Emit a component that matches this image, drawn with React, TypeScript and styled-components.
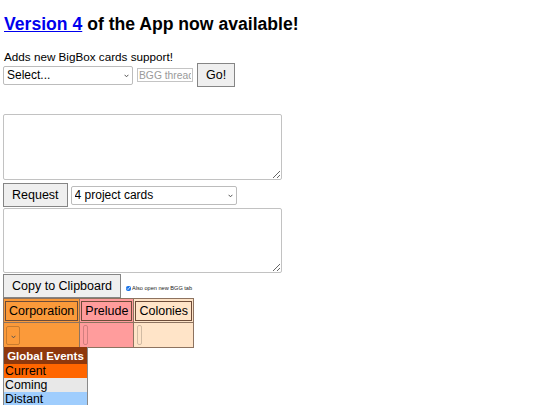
import React from "react";
import styled, { createGlobalStyle } from "styled-components";

const GlobalStyle = createGlobalStyle`
  html, body { margin: 0; padding: 0; background: #ffffff; }
  body { font-family: "Liberation Sans", Arial, sans-serif; color: #000; }
`;

const Page = styled.div`
  display: flex;
  flex-direction: column;
  align-items: flex-start;
  padding: 0 3px;
`;

const Title = styled.h3`
  margin: 14px 0 0 1px;
  font-size: 17.6px;
  line-height: 20px;
  font-weight: bold;
  a { color: #0000ee; text-decoration: underline; }
`;

const Note = styled.p`
  margin: 16px 0 0 1px;
  font-size: 11.7px;
  line-height: 13px;
`;

const Row = styled.div<{ $top?: number; $gap?: number }>`
  display: flex;
  align-items: center;
  gap: ${(p) => p.$gap ?? 4}px;
  margin-top: ${(p) => p.$top ?? 0}px;
`;

const SelectWrap = styled.span`
  position: relative;
  display: inline-flex;
`;

const Chevron = styled.svg<{ $right: number }>`
  position: absolute;
  right: ${(p) => p.$right}px;
  top: 50%;
  width: 5px;
  height: 4px;
  margin-top: -1px;
  pointer-events: none;
`;

const Select = styled.select<{ $w: number }>`
  appearance: none;
  width: ${(p) => p.$w}px;
  height: 19px;
  box-sizing: border-box;
  font-family: "Liberation Sans", Arial, sans-serif;
  font-size: 12px;
  border: 1px solid #bcbcbc;
  border-radius: 2px;
  background: #fff;
  color: #000;
  padding: 0 12px 0 3px;
  margin: 0;
`;

const ThreadInput = styled.input`
  width: 56px;
  height: 14px;
  box-sizing: border-box;
  font-family: "Liberation Sans", Arial, sans-serif;
  font-size: 10.3px;
  border: 1px solid #c4c4c4;
  padding: 0 1px;
  margin: 0;
  &::placeholder { color: #9a9a9a; }
`;

const Button = styled.button`
  height: 24px;
  box-sizing: border-box;
  font-family: "Liberation Sans", Arial, sans-serif;
  font-size: 12.5px;
  line-height: 14px;
  padding: 0 8px;
  margin: 0;
  background: #efefef;
  color: #000;
  border: 1px solid #858585;
  border-radius: 0;
`;

const TextArea = styled.textarea<{ $top: number; $h: number }>`
  display: block;
  width: 279px;
  height: ${(p) => p.$h}px;
  box-sizing: border-box;
  margin: ${(p) => p.$top}px 0 0 0;
  border: 1px solid #c2c2c2;
  border-radius: 2px;
  font-family: "Liberation Mono", monospace;
  font-size: 12px;
`;

const Check = styled.input`
  width: 5px;
  height: 5px;
  margin: 4px 0 0 5px;
  accent-color: #1a73e8;
`;

const TinyLabel = styled.span`
  font-size: 5.6px;
  line-height: 7px;
  margin: 4px 0 0 1px;
  color: #222;
`;

const CardTable = styled.table`
  border-collapse: collapse;
  border: 1px solid #8d7360;
  margin: 0;
`;

const CardCell = styled.td<{ $bg: string; $h: number }>`
  background: ${(p) => p.$bg};
  border: 1px solid #8d7360;
  padding: 0 1px;
  height: ${(p) => p.$h}px;
  box-sizing: border-box;
  vertical-align: middle;
`;

const CardButton = styled.button<{ $bg: string }>`
  display: block;
  height: 20px;
  box-sizing: border-box;
  font-family: "Liberation Sans", Arial, sans-serif;
  font-size: 12.5px;
  line-height: 14px;
  padding: 0 3px;
  margin: 0;
  background: ${(p) => p.$bg};
  color: #000;
  border: 1px solid #6e4c38;
  border-radius: 0;
`;

const CorpSelect = styled.select`
  appearance: none;
  display: block;
  width: 14px;
  height: 19px;
  box-sizing: border-box;
  border: 1px solid rgba(0, 0, 0, 0.2);
  border-radius: 2px;
  background: transparent;
  padding: 0;
  margin: 0 0 0 1px;
  font-size: 10px;
`;

const StubSelect = styled.select`
  display: block;
  appearance: none;
  width: 5px;
  height: 20px;
  box-sizing: border-box;
  border: 1px solid rgba(0, 0, 0, 0.18);
  border-radius: 2px;
  background: transparent;
  padding: 0;
  margin: 0 0 0 2px;
`;

const EventsTable = styled.table`
  border-collapse: collapse;
  width: 85px;
  border-left: 1px solid #8a8a8a;
  border-right: 1px solid #8a8a8a;
  margin: -1px 0 0 0;
`;

const EventsHead = styled.th`
  background: #8f380c;
  color: #ffffff;
  font-size: 11.5px;
  font-weight: bold;
  height: 17px;
  padding: 0;
  text-align: center;
`;

const EventRow = styled.td<{ $bg: string }>`
  background: ${(p) => p.$bg};
  font-size: 12.3px;
  line-height: 14px;
  height: 14px;
  padding: 0 0 0 1px;
  text-align: left;
`;

function ChevronIcon({ right }: { right: number }) {
  return (
    <Chevron $right={right} viewBox="0 0 5 4">
      <path d="M0.6 0.8 L2.5 2.8 L4.4 0.8" fill="none" stroke="#555" strokeWidth="1" />
    </Chevron>
  );
}

export default function App() {
  return (
    <>
      <GlobalStyle />
      <Page>
        <Title>
          <a href="#">Version 4</a> of the App now available!
        </Title>
        <Note>Adds new BigBox cards support!</Note>
        <Row>
          <SelectWrap>
            <Select $w={130} defaultValue="none">
              <option value="none">Select...</option>
            </Select>
            <ChevronIcon right={4} />
          </SelectWrap>
          <ThreadInput placeholder="BGG thread URL" />
          <Button>Go!</Button>
        </Row>
        <TextArea $top={27} $h={66} />
        <Row $top={3} $gap={3}>
          <Button>Request</Button>
          <SelectWrap>
            <Select $w={166} defaultValue="4">
              <option value="4">4 project cards</option>
            </Select>
            <ChevronIcon right={4} />
          </SelectWrap>
        </Row>
        <TextArea $top={1} $h={65} />
        <Row $top={1} $gap={0}>
          <Button>Copy to Clipboard</Button>
          <Check type="checkbox" defaultChecked />
          <TinyLabel>Also open new BGG tab</TinyLabel>
        </Row>
        <CardTable>
          <tbody>
            <tr>
              <CardCell $bg="#fb9a3a" $h={24}>
                <CardButton $bg="#fb9a3a">Corporation</CardButton>
              </CardCell>
              <CardCell $bg="#ff9c9c" $h={24}>
                <CardButton $bg="#ff9c9c">Prelude</CardButton>
              </CardCell>
              <CardCell $bg="#ffe4c8" $h={24}>
                <CardButton $bg="#ffe4c8">Colonies</CardButton>
              </CardCell>
            </tr>
            <tr>
              <CardCell $bg="#fb9a3a" $h={25}>
                <SelectWrap>
                  <CorpSelect />
                  <ChevronIcon right={4} />
                </SelectWrap>
              </CardCell>
              <CardCell $bg="#ff9c9c" $h={25}>
                <StubSelect />
              </CardCell>
              <CardCell $bg="#ffe4c8" $h={25}>
                <StubSelect />
              </CardCell>
            </tr>
          </tbody>
        </CardTable>
        <EventsTable>
          <tbody>
            <tr>
              <EventsHead>Global Events</EventsHead>
            </tr>
            <tr>
              <EventRow $bg="#ff6600">Current</EventRow>
            </tr>
            <tr>
              <EventRow $bg="#e8e8e8">Coming</EventRow>
            </tr>
            <tr>
              <EventRow $bg="#9fcdfd">Distant</EventRow>
            </tr>
          </tbody>
        </EventsTable>
      </Page>
    </>
  );
}
